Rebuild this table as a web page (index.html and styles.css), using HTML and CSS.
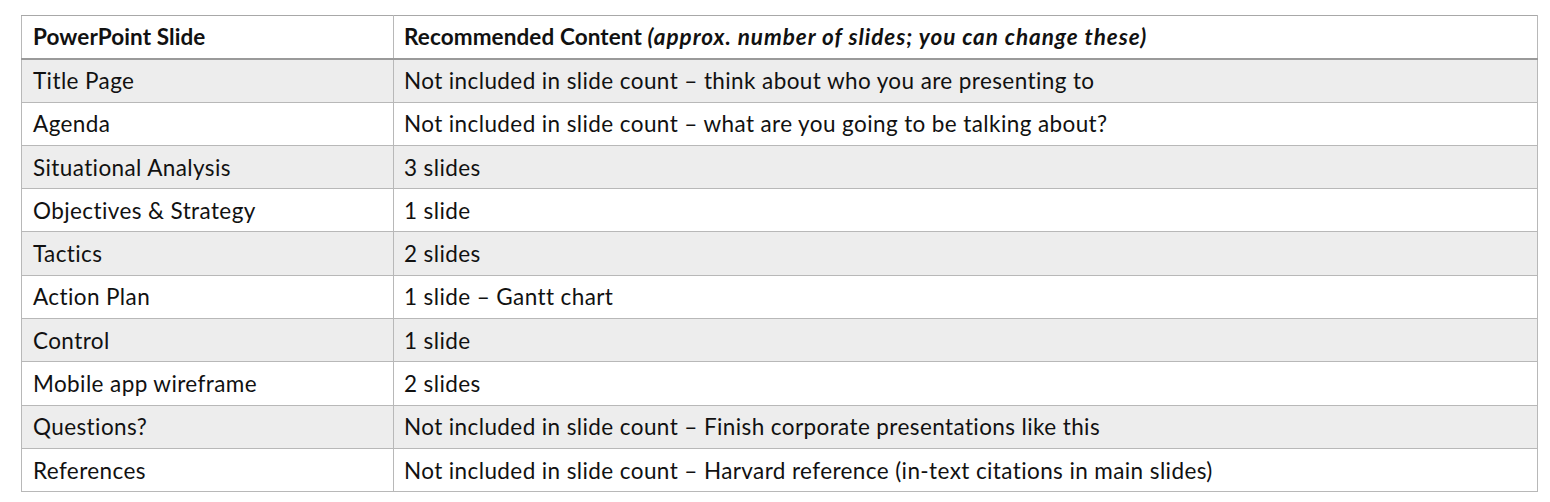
FILE: index.html
```html
<!DOCTYPE html>
<html>
<head>
<meta charset="utf-8">
<link rel="stylesheet" href="styles.css">
</head>
<body>
<table class="slides">
  <thead>
    <tr><th class="c1">PowerPoint Slide</th><th class="c2">Recommended Content <em>(approx. number of slides; you can change these)</em></th></tr>
  </thead>
  <tbody>
    <tr class="alt"><td>Title Page</td><td>Not included in slide count – think about who you are presenting to</td></tr>
    <tr><td>Agenda</td><td>Not included in slide count – what are you going to be talking about?</td></tr>
    <tr class="alt"><td>Situational Analysis</td><td>3 slides</td></tr>
    <tr><td>Objectives &amp; Strategy</td><td>1 slide</td></tr>
    <tr class="alt"><td>Tactics</td><td>2 slides</td></tr>
    <tr><td>Action Plan</td><td>1 slide – Gantt chart</td></tr>
    <tr class="alt"><td>Control</td><td>1 slide</td></tr>
    <tr><td>Mobile app wireframe</td><td>2 slides</td></tr>
    <tr class="alt"><td>Questions?</td><td>Not included in slide count – Finish corporate presentations like this</td></tr>
    <tr><td>References</td><td>Not included in slide count – Harvard reference (in-text citations in main slides)</td></tr>
  </tbody>
</table>
</body>
</html>
```
FILE: styles.css
```css
html, body { margin: 0; padding: 0; background: #fff; }
body { padding: 15px 0 0 21px; }
.slides {
  border-collapse: collapse;
  width: 1517px;
  font-family: Lato, "Noto Sans", sans-serif;
  font-size: 22.5px;
  letter-spacing: 0.4px;
  color: #111;
  border: 1px solid #a8a8a8;
}
.slides th, .slides td {
  border: 1px solid #b8b8b8;
  height: 43.3px;
  padding: 0 9px 0 10px;
  text-align: left;
  vertical-align: middle;
  box-sizing: border-box;
}
.slides th { font-weight: bold; letter-spacing: 0.1px; border-bottom: 2px solid #9a9a9a; border-top-color: #a8a8a8; }
.slides th em { font-style: italic; letter-spacing: 0.95px; }
.slides td:first-child { padding-left: 11px; }
.slides .c1 { width: 372px; padding-left: 11px; }
.slides tr.alt td { background: #ededed; }
```
